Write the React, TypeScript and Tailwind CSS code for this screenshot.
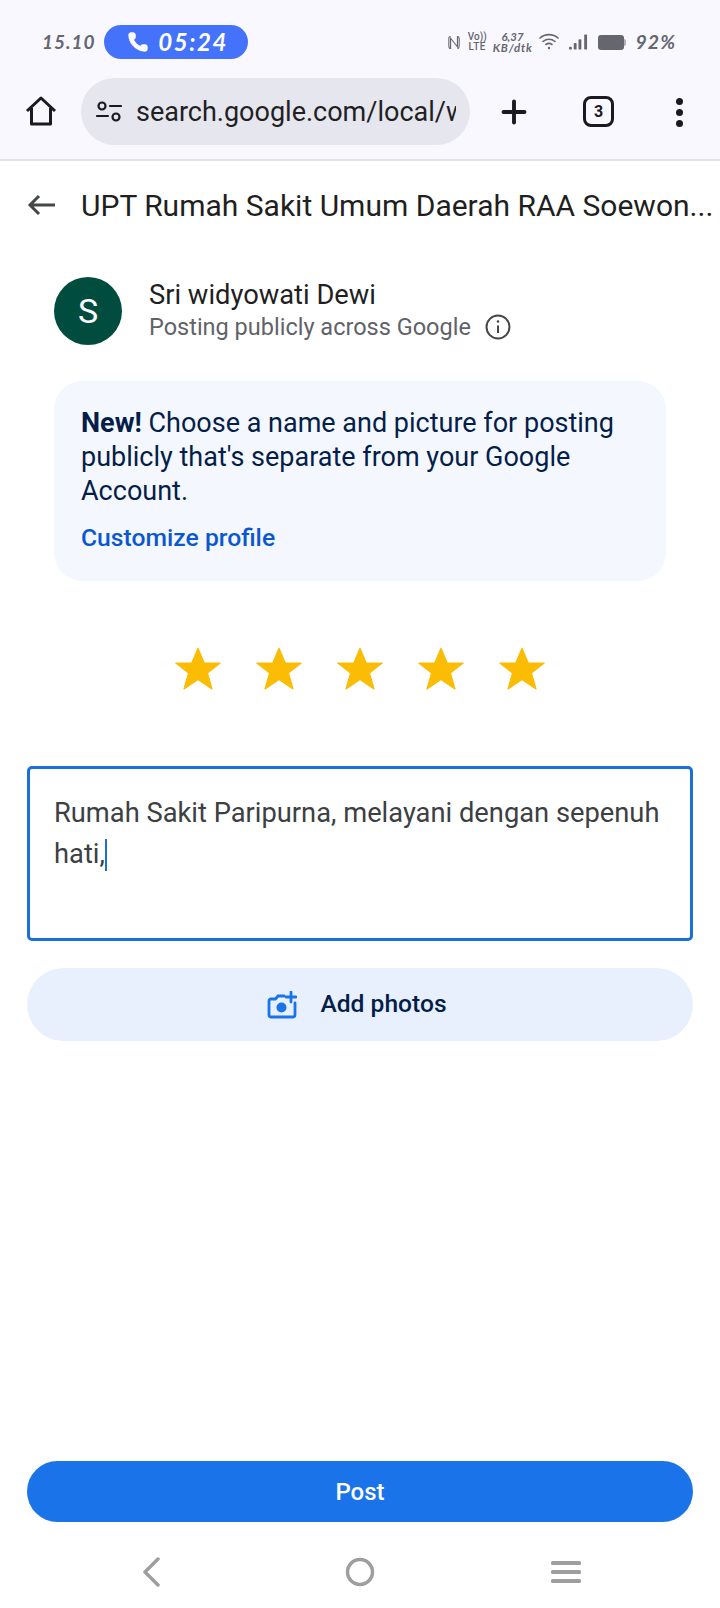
import { Plus, Phone } from "lucide-react";

const roboto = "font-['Roboto','Noto_Sans',sans-serif]";
const statusFont = "font-['Lato','Noto_Sans',sans-serif]";

function Star() {
	return (
		<svg width="48" height="48" viewBox="0 0 24 24" className="block">
			<path
				d="M12 1.6 15.1 9h8l-6.4 5 2.3 8-7-4.7L5 22l2.3-8L.9 9h8z"
				fill="#fbbc04"
				stroke="#fbbc04"
				strokeWidth="0.6"
				strokeLinejoin="round"
			/>
		</svg>
	);
}

function StatusBar() {
	return (
		<div className="h-[78px] flex items-start pt-[25px] pl-[42px] pr-[44px] justify-between">
			<div className="flex items-center gap-2">
				<span className={`${statusFont} italic font-bold text-[19px] tracking-[1px] text-[#666670]`}>15.10</span>
				<div className="w-[144px] h-[34px] rounded-full bg-[#4472fa] flex items-center justify-center gap-[9px] pl-[4px]">
					<Phone size={22} fill="white" stroke="white" strokeWidth={1} />
					<span className={`${statusFont} italic font-bold text-[24px] leading-none tracking-[1.6px] text-white`}>05:24</span>
				</div>
			</div>
			<div className="flex items-center h-[34px] text-[#66666e]">
				{/* NFC */}
				<svg width="12" height="17" viewBox="0 0 14 18" fill="none" stroke="currentColor" strokeWidth="1.3" className="mr-[8px]">
					<path d="M3 2C1 2 1 3 1 5v8c0 2 .6 3 2 3V4l8 10V2c2 0 2 1 2 3v8c0 2-.6 3-2 3" />
				</svg>
				<div className={`${roboto} flex flex-col items-center font-medium text-[10px] leading-[10px] mr-[6px]`}>
					<span>Vo))</span>
					<span className="tracking-[0.5px]">LTE</span>
				</div>
				<div className={`${statusFont} flex flex-col items-center italic font-bold text-[11.500px] leading-[11px] mr-[6px]`}>
					<span>6,37</span>
					<span className="tracking-[0.8px]">KB/dtk</span>
				</div>
				<svg width="20" height="18" viewBox="0 0 20 18" fill="none" stroke="currentColor" strokeWidth="1.6" strokeLinecap="round" className="mr-[10px]">
					<path d="M1 5c5-4.500 13-4.500 18 0M4 8.500c3.500-3 8.500-3 12 0M7 11.500c2-1.500 4-1.500 6 0" />
					<circle cx="10" cy="15" r="1.200" fill="currentColor" stroke="none" />
				</svg>
				<svg width="19" height="18" viewBox="0 0 20 18" fill="currentColor" className="mr-[10px]">
					<rect x="0" y="14" width="3" height="3" rx="1" />
					<rect x="5" y="10" width="3" height="7" rx="1" />
					<rect x="10" y="6" width="3" height="11" rx="1" />
					<rect x="16" y="1" width="3" height="16" rx="1" />
				</svg>
				<div className="flex items-center mr-[10px]">
					<div className="w-[26px] h-[15px] rounded-[3px] bg-[#66666e]" />
					<div className="w-[2px] h-[7px] bg-[#b0b0b6] rounded-r-sm" />
				</div>
				<span className={`${statusFont} italic font-bold text-[19.500px] tracking-[1px]`}>92%</span>
			</div>
		</div>
	);
}

function Toolbar() {
	return (
		<div className="h-[83px] border-b-2 border-[#e2e2e9] flex items-start pl-[25px]">
			<svg width="32" height="32" viewBox="0 0 32 32" fill="none" stroke="#1b1b1f" strokeWidth="3" strokeLinejoin="round" className="mt-[17px]">
				<path d="M2 16 16 3l14 13M6.500 13v16h19V13" />
			</svg>
			<div className="ml-[24px] w-[389px] h-[67px] rounded-full bg-[#e6e6ee] flex items-center pl-[15px]">
				<svg width="26" height="24" viewBox="0 0 26 24" fill="none" stroke="#1b1b1f" strokeWidth="2.200" strokeLinecap="round">
					<circle cx="6" cy="6" r="3.500" />
					<path d="M14 6h11M1 16h11" />
					<circle cx="20" cy="17" r="3.500" />
				</svg>
				<div className={`${roboto} ml-[14px] mt-[1px] w-[320px] overflow-hidden whitespace-nowrap text-[27px] text-[#1f1f24]`}>search.google.com/local/writereview</div>
			</div>
			<Plus size={36} strokeWidth={2.600} color="#1b1b1f" className="ml-[26px] mt-[16px]" />
			<div className={`${roboto} ml-[51px] mt-[18px] w-[31px] h-[31px] rounded-[8px] border-[3px] border-[#1b1b1f] flex items-center justify-center text-[16px] font-bold text-[#1b1b1f]`}>3</div>
			<div className="ml-[62px] mt-[20px] flex flex-col gap-[4px]">
				<div className="w-[7px] h-[7px] rounded-full bg-[#1b1b1f]" />
				<div className="w-[7px] h-[7px] rounded-full bg-[#1b1b1f]" />
				<div className="w-[7px] h-[7px] rounded-full bg-[#1b1b1f]" />
			</div>
		</div>
	);
}

export default function App() {
	return (
		<div className={`${roboto} w-[720px] h-[1608px] bg-white flex flex-col overflow-hidden`}>
			<div className="bg-[#f8f8fe]">
				<StatusBar />
				<Toolbar />
			</div>

			{/* page header */}
			<div className="h-[88px] flex items-center pl-[27px]">
				<svg width="28" height="22" viewBox="0 0 28 22" fill="none" stroke="#444746" strokeWidth="3" className="shrink-0">
					<path d="M28 11H3M12 2l-9 9 9 9" />
				</svg>
				<div className="ml-[26px] text-[30px] whitespace-nowrap text-[#1f1f1f]">UPT Rumah Sakit Umum Daerah RAA Soewon...</div>
			</div>

			{/* user */}
			<div className="flex items-center ml-[54px] mt-[28px]">
				<div className="w-[68px] h-[68px] rounded-full bg-[#004d40] flex items-center justify-center text-white text-[34px]">S</div>
				<div className="ml-[27px]">
					<div className="text-[27.300px] leading-[32px] text-[#1f1f1f]">Sri widyowati Dewi</div>
					<div className="flex items-center text-[23.500px] leading-[32px] text-[#5f6368]">
						Posting publicly across Google
						<svg width="26" height="26" viewBox="0 0 26 26" fill="none" stroke="#444746" strokeWidth="2" className="ml-[14px]">
							<circle cx="13" cy="13" r="11.500" />
							<path d="M13 11.500V19" />
							<circle cx="13" cy="7.500" r="1.300" fill="#444746" stroke="none" />
						</svg>
					</div>
				</div>
			</div>

			{/* notice */}
			<div className="mt-[36px] mx-[54px] h-[200px] rounded-[28px] bg-[#f4f8fe] px-[27px] pt-[26px]">
				<p className="text-[27px] leading-[33.800px] text-[#041e49]">
					<b>New!</b> Choose a name and picture for posting publicly that's separate from your Google Account.
				</p>
				<div className="mt-[14px] text-[24.700px] leading-[32px] font-medium text-[#0b57d0]">Customize profile</div>
			</div>

			{/* rating */}
			<div className="mt-[64px] flex justify-center gap-[33px]">
				<Star />
				<Star />
				<Star />
				<Star />
				<Star />
			</div>

			{/* review box */}
			<div className="mt-[73px] mx-[27px] h-[175px] rounded-[5px] border-[3px] border-[#1a6fd8] pl-[24px] pt-[24px] text-[27.300px] leading-[41px] text-[#3c4043]">
				<div className="whitespace-nowrap">Rumah Sakit Paripurna, melayani dengan sepenuh</div>
				<div className="flex items-center">
					hati,
					<span className="w-[2px] h-[32px] bg-[#1a6fd8]" />
				</div>
			</div>

			{/* add photos */}
			<div className="mt-[27px] mx-[27px] h-[73px] rounded-full bg-[#e9f0fd] flex items-center justify-center pr-[6px]">
				<svg width="30" height="28" viewBox="0 0 30 28" fill="none" stroke="#1a73e8" strokeWidth="2.800" strokeLinecap="round" className="mr-[23px]">
					<path d="M17 5h-6L8.500 8H4a2 2 0 0 0-2 2v14a2 2 0 0 0 2 2h22a2 2 0 0 0 2-2V12" />
					<circle cx="14.500" cy="16.500" r="5" fill="#1a73e8" stroke="none" />
					<path d="M24 1v10M19 6h10" />
				</svg>
				<span className="text-[24.600px] font-medium text-[#041e49]">Add photos</span>
			</div>

			{/* post */}
			<div className="mt-auto mx-[27px] h-[61px] rounded-full bg-[#1a73e8] flex items-center justify-center text-white text-[24px] font-medium">Post</div>

			{/* android nav */}
			<div className="h-[86px] flex items-center justify-between pl-[141px] pr-[139px] pt-[14px]">
				<svg width="20" height="30" viewBox="0 0 20 30" fill="none" stroke="#9e9e9e" strokeWidth="3.500" strokeLinecap="round" strokeLinejoin="round">
					<path d="M17 2 4 15l13 13" />
				</svg>
				<svg width="30" height="30" viewBox="0 0 30 30" fill="none" stroke="#9e9e9e" strokeWidth="3.500" className="ml-[8px]">
					<circle cx="15" cy="15" r="12.500" />
				</svg>
				<svg width="30" height="26" viewBox="0 0 30 26" fill="#9e9e9e">
					<rect x="0" y="2" width="30" height="4" rx="1.500" />
					<rect x="0" y="11" width="30" height="4" rx="1.500" />
					<rect x="0" y="20" width="30" height="4" rx="1.500" />
				</svg>
			</div>
		</div>
	);
}
